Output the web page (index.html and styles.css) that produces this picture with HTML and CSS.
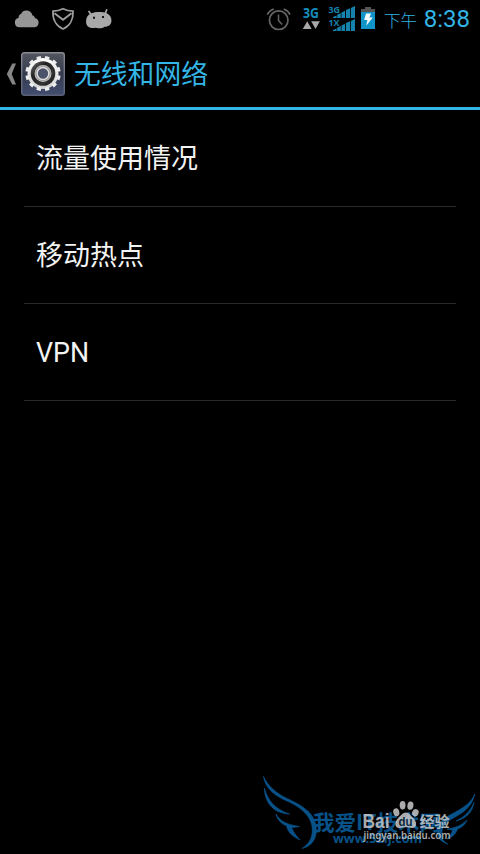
FILE: index.html
```html
<!DOCTYPE html>
<html lang="zh-CN">
<head>
<meta charset="utf-8">
<title>无线和网络</title>
<link rel="stylesheet" href="styles.css">
</head>
<body>
<main class="screen">
  <header class="status">
    <svg class="notifications" width="120" height="38" viewBox="0 0 120 38" aria-hidden="true">
      <path fill="#969696" d="M19.500 27.300a4.800 4.800 0 0 1-.8-9.500 3.500 3.500 0 0 1 2.300-3.800 6 6 0 0 1 11.300 1.300q2 .3 2.700 2.800a4.700 4.700 0 0 1-.3 9.200z"/>
      <g fill="none" stroke="#9c9c9c" stroke-width="1.800">
        <path d="M63 8.800Q67.500 11 73 11.200C73.500 19 70 26 63 29 56 26 52.500 19 53 11.200Q58.500 11 63 8.800z"/>
        <path d="M54.500 13.300 63 19.800 71.500 13.300" stroke-width="2"/>
      </g>
      <path d="M89 11.500l2 3M106.700 9.800l-1.500 4" stroke="#a8a8a8" stroke-width="1.700" stroke-linecap="round"/>
      <path fill="#a8a8a8" d="M87 17C89 13.500 93 12 99 12s9.500 1.300 11.500 4.500c1.500 3 1.300 6.500-.7 8.500-1.700 1.500-3.500 1.800-5.300 1.700-2 1.700-5.500 2.200-8.500 1-3.500.8-6.800.5-8.800-2-1.700-2.500-1.300-6.200-.2-8.700z"/>
      <path fill="#111" d="M93 16.800h2v2h-2zM102 16h2v2h-2z"/>
    </svg>
    <svg class="signals" width="118" height="38" viewBox="262 0 118 38" aria-hidden="true">
      <g fill="none" stroke="#666" stroke-width="1.700">
        <circle cx="278.700" cy="20.200" r="9.300"/>
        <path d="M278.500 14.500v6l3.700 4" stroke-width="1.500"/>
        <path d="M267.300 14.700Q269.500 10.500 273.700 9M283.700 9Q288 10.500 290 14.700"/>
      </g>
      <text class="net" x="303" y="18" textLength="16" lengthAdjust="spacingAndGlyphs">3G</text>
      <path fill="#a8a8a8" d="M302.800 29 307.200 21.300 311.600 29zM311.200 21.300h8.700L315.500 29z"/>
      <text class="net-small" x="328.500" y="13" textLength="11.500" lengthAdjust="spacingAndGlyphs">3G</text>
      <text class="net-small" x="328.500" y="26" textLength="11" lengthAdjust="spacingAndGlyphs">1X</text>
      <g fill="#1482ac">
        <path d="M333 18v-1l3.600-1.500V18zM337.200 18v-3.300l3.600-1.700v5zM341.500 18v-5.500l3.600-1.800V18zM346 18v-8l4-1.800V18zM350.800 18V7.900L355 6v12z"/>
        <path d="M333 31v-1l3.600-1.500V31zM337.200 31v-3.300l3.600-1.700v5zM341.500 31v-5.500l3.600-1.800V31zM346 31v-8l4-1.800V31zM350.800 31V20.900L355 19v12z"/>
      </g>
      <path fill="#555" d="M361 12V9h4V7h6v2h4v3z"/>
      <path fill="#1195c9" d="M361 12h14v17h-14z"/>
      <path fill="#f4fbff" d="M366 13.500h5l-1.500 4h3.300l-6.600 8.300 1.200-5.800h-3.200z"/>
    </svg>
    <span class="period">下午</span>
    <span class="clock">8:38</span>
  </header>

  <nav class="titlebar">
    <svg class="back" width="11" height="24" viewBox="0 0 11 24" aria-hidden="true"><path fill="#858585" d="M6.300 1.500H10L5.700 12 10 22.500H6.300L.8 12z"/></svg>
    <svg class="gear" width="44" height="44" viewBox="0 0 44 44" aria-hidden="true">
      <defs>
        <linearGradient id="tile" x2="0" y2="1"><stop stop-color="#53565f"/><stop offset=".5" stop-color="#343a4d"/><stop offset="1" stop-color="#424e70"/></linearGradient>
        <linearGradient id="edge" x2="0" y2="1"><stop stop-color="#888b92"/><stop offset="1" stop-color="#596078"/></linearGradient>
        <linearGradient id="metal" x2="0" y2="1"><stop stop-color="#fff"/><stop offset="1" stop-color="#d0d0d0"/></linearGradient>
        <linearGradient id="ring" x2="1" y2="1"><stop stop-color="#777"/><stop offset=".35" stop-color="#222"/><stop offset=".7" stop-color="#333"/><stop offset="1" stop-color="#111"/></linearGradient>
      </defs>
      <rect x=".7" y=".7" width="42.600" height="42.600" rx="2.500" fill="url(#tile)" stroke="url(#edge)" stroke-width="1.400"/>
      <g transform="translate(22 21.500)">
        <circle r="15.500" fill="url(#metal)"/>
        <circle r="16" fill="none" stroke="#eee" stroke-width="3.400" pathLength="144" stroke-dasharray="6 6" stroke-dashoffset="-3"/>
        <circle r="12.300" fill="url(#ring)"/>
        <circle r="7.900" fill="#8b8b8b" stroke="#bbb" stroke-width="1.200"/>
        <circle r="5.900" fill="#4b536b" stroke="#ddd" stroke-width="1.500"/>
      </g>
    </svg>
    <h1 class="title">无线和网络</h1>
  </nav>

  <ul class="settings">
    <li class="item">流量使用情况</li>
    <li class="item">移动热点</li>
    <li class="item latin">VPN</li>
  </ul>

  <svg class="watermark" width="220" height="84" viewBox="260 770 220 84">
    <g fill="#075288">
      <g class="wings">
        <path d="M263.500 776.500C268 786 276 793 286 798c15 7 28 14 30 28 1.500 11-3 20-14 22.500 6-4 10-9 10.300-17C313 818 303 808 287 801c-14-6-22-14-23.500-24.500z"/>
        <path d="M264.300 788c3.500 12 10 21 25.200 26-14-.5-24.500-9-25.200-26z"/>
        <path d="M276 814c4 7 10 10.500 23.500 12.500-4 .8-6.300.8-8 1.300 2 4.500 4.500 8 8.500 12-7-3-12-7-13.500-14-5-2-9-5.500-10.500-11.800z"/>
        <path d="M474.800 794c-2.500 11-9 17-18 22-8 4.500-14.500 8-15 17-.2 5 1.500 9 6 11-7-2-10.300-6-10.200-12.500.2-11 8.700-14.500 18-19.500 9-5 16-10 19.200-18z"/>
        <path d="M474 802.500c-1.500 10-8 16-18 18.500 8-4 14-9 18-18.500z"/>
        <path d="M467 820c-2 5-5 7-9.500 9-2 5.500-5 8-10.500 10 3-3 5-6 5.500-9-1.800-.5-3.500-.3-5.500-.8 9-1.500 15-4 20-9.200z"/>
      </g>
      <text class="site" x="313" y="830" textLength="128" lengthAdjust="spacingAndGlyphs">我爱IT技术网</text>
      <text class="site-url" x="333" y="843" textLength="89" lengthAdjust="spacingAndGlyphs">www.52ij.com</text>
    </g>
    <g class="brand">
      <text class="baidu" x="362.500" y="828" textLength="27" lengthAdjust="spacingAndGlyphs">Bai</text>
      <ellipse cx="396.300" cy="812.300" rx="3" ry="4" transform="rotate(-15 396.300 812.300)"/>
      <ellipse cx="402.600" cy="805.300" rx="2.900" ry="4.200"/>
      <ellipse cx="410.400" cy="805.600" rx="3" ry="4.200" transform="rotate(8 410.400 805.600)"/>
      <ellipse cx="415.400" cy="812.700" rx="3.200" ry="3.700" transform="rotate(20 415.400 812.700)"/>
      <path d="M406 812.500c3 0 4.500 3 7 5.200 4 3.500 4.700 10.300-1 10.300-2.500 0-4-.7-6.300-.7s-4 .7-6.300.7c-5.200 0-5-6.500-1.200-10 2.800-2.500 4.600-5.500 7.800-5.500z"/>
      <text class="jingyan" x="419.500" y="826.500" textLength="30" lengthAdjust="spacingAndGlyphs">经验</text>
      <text class="baidu-url" x="363.500" y="839" textLength="87" lengthAdjust="spacingAndGlyphs">jingyan.baidu.com</text>
      <text class="du" x="398.500" y="826" textLength="14" lengthAdjust="spacingAndGlyphs">du</text>
    </g>
  </svg>
</main>
</body>
</html>
```
FILE: styles.css
```css
* { box-sizing: border-box; }

body {
  margin: 0;
  background: #000;
}

.screen {
  position: relative;
  width: 480px;
  height: 854px;
  overflow: hidden;
  background: #000;
  color: #f3f3f3;
  font-family: Roboto, "Noto Sans CJK SC", sans-serif;
}

.status {
  display: flex;
  height: 38px;
  padding-right: 10px;
  color: #33b5e5;
  line-height: 38px;
}

.signals {
  margin-left: auto;
  font-family: "Open Sans", sans-serif;
}

.net {
  fill: #168ebd;
  font-size: 15px;
  font-weight: 700;
}

.net-small {
  fill: #1482ac;
  font-size: 9.5px;
  font-weight: 700;
}

.period {
  width: 42px;
  padding: 3px 0 0 4px;
  font-size: 16.5px;
  font-weight: 300;
  white-space: nowrap;
}

.clock {
  width: 48px;
  font-size: 24px;
  text-align: right;
}

.titlebar {
  display: flex;
  align-items: center;
  height: 72px;
  padding-left: 6px;
  border-bottom: 3px solid #33b5e5;
}

.back { margin: 2px 4px 0 0; }

.gear { margin-top: 2px; }

.title {
  margin: 4px 0 0 9px;
  color: #33b5e5;
  font-size: 26.8px;
  font-weight: 400;
  line-height: 40px;
}

.settings {
  margin: 0;
  padding: 0 24px;
  list-style: none;
}

.item {
  height: 97px;
  padding: 1px 0 0 12px;
  border-bottom: 1px solid #292929;
  font-size: 27px;
  line-height: 96px;
}

.latin { font-size: 26.8px; }

.watermark {
  position: absolute;
  right: 0;
  bottom: 0;
}

.wings {
  stroke: #075288;
  stroke-width: .7;
}

.brand {
  fill: #c8c8c8;
  opacity: .86;
}

.baidu {
  font: 700 20px "Liberation Sans", sans-serif;
}

.jingyan {
  font: 700 15px "Noto Sans CJK SC", sans-serif;
}

.baidu-url {
  font: 600 11px "Noto Sans", sans-serif;
}

.du {
  fill: #08283e;
  font: 700 12px "Liberation Sans", sans-serif;
}

.site {
  font: 700 21px "Noto Sans CJK SC", sans-serif;
}

.site-url {
  font: 700 12px "Open Sans", sans-serif;
}
```
